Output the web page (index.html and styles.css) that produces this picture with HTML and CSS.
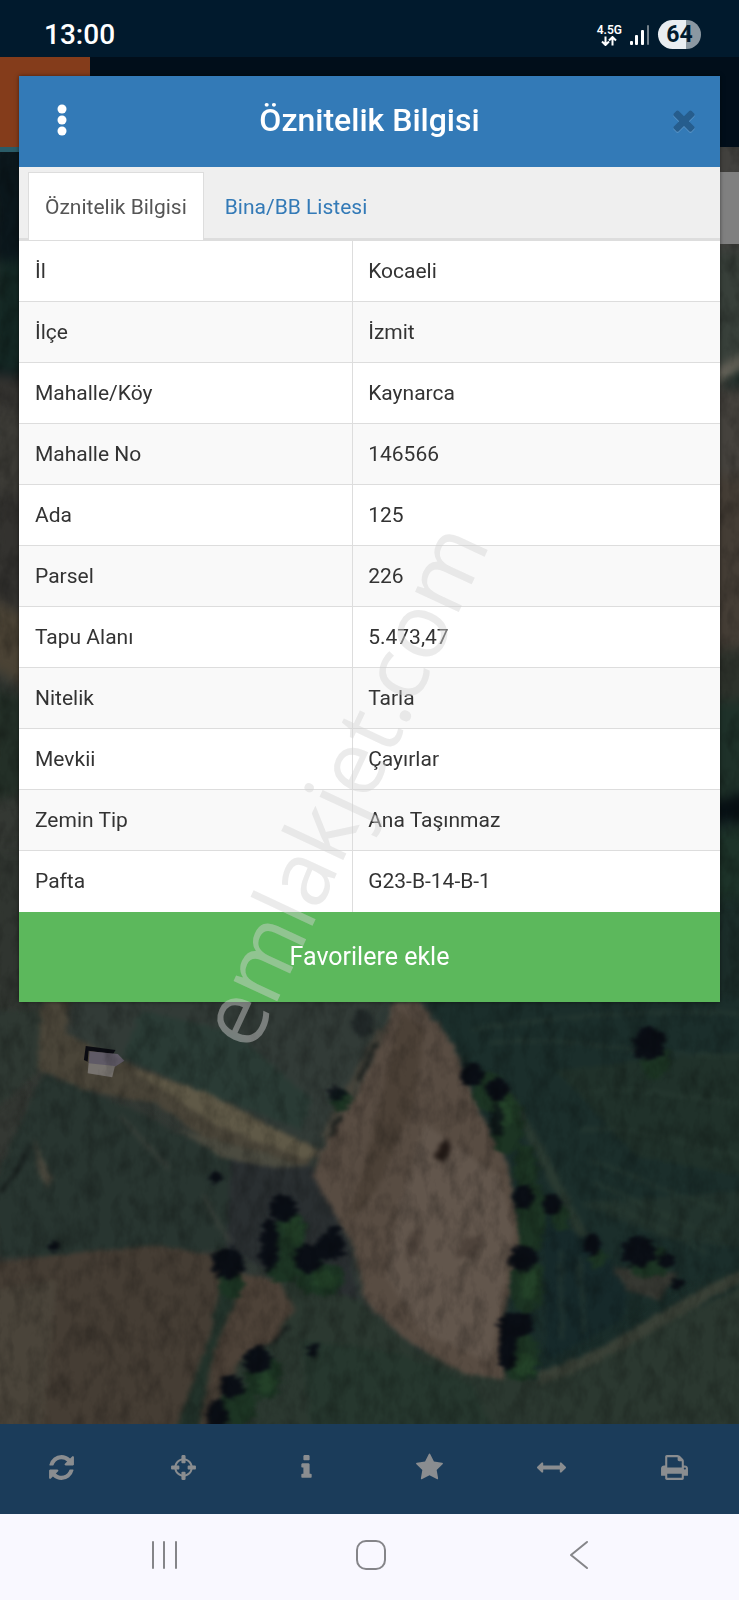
FILE: index.html
```html
<!DOCTYPE html>
<html lang="tr">
  <head>
    <meta charset="UTF-8" />
    <meta name="viewport" content="width=device-width, initial-scale=1.0" />
    <title>Öznitelik Bilgisi</title>
    <link rel="stylesheet" href="styles.css">
  </head>
  <body>
    <div class="app">
      <div class="status_bar">
        <span class="clock">13:00</span>
        <div class="status_icons">
          <div class="network">
            <span>4.5G</span>
            <svg viewBox="0 0 16 10" width="16" height="10">
              <path d="M4.5 0.5V9M1 5.5 4.5 9 8 5.5M11.5 9.5V1M8 4.5 11.5 1 15 4.5" />
            </svg>
          </div>
          <svg class="signal" viewBox="0 0 20 20" width="20" height="20">
            <rect x="0" y="16" width="3" height="4" rx="1" />
            <rect x="5" y="10" width="3" height="10" rx="1" />
            <rect x="11" y="5" width="3" height="15" rx="1" />
            <rect x="17" y="0" width="2" height="20" rx="1" opacity=".45" />
          </svg>
          <span class="battery">64</span>
        </div>
      </div>

      <div class="top_bar">
        <div class="top_bar_menu"></div>
      </div>

      <div class="map">
        <svg class="map_image" viewBox="0 147 739 1277" preserveAspectRatio="xMidYMid slice">
          <defs>
            <filter id="soft" x="-5%" y="-5%" width="110%" height="110%" color-interpolation-filters="sRGB">
              <feTurbulence type="fractalNoise" baseFrequency=".05" numOctaves="3" seed="4" result="n" />
              <feDisplacementMap in="SourceGraphic" in2="n" scale="16" xChannelSelector="R" yChannelSelector="G" />
              <feGaussianBlur stdDeviation="6" />
            </filter>
            <filter id="tree" x="-20%" y="-20%" width="140%" height="140%" color-interpolation-filters="sRGB">
              <feTurbulence type="fractalNoise" baseFrequency=".07" numOctaves="3" seed="9" result="n" />
              <feDisplacementMap in="SourceGraphic" in2="n" scale="30" xChannelSelector="R" yChannelSelector="G" />
              <feGaussianBlur stdDeviation="4" />
            </filter>
            <filter id="grain" x="0" y="0" width="100%" height="100%">
              <feTurbulence type="fractalNoise" baseFrequency=".07 .04" numOctaves="4" seed="2" />
              <feColorMatrix values="0 0 0 0 0  0 0 0 0 0  0 0 0 0 0  1.6 0 0 0 -.65" />
            </filter>
            <linearGradient id="land" x1="0" y1="0" x2="1" y2="0">
              <stop offset="0" stop-color="#343833" />
              <stop offset=".5" stop-color="#303a36" />
              <stop offset=".65" stop-color="#1a2d2b" />
              <stop offset="1" stop-color="#1b2d29" />
            </linearGradient>
          </defs>
          <rect y="147" width="739" height="1277" fill="url(#land)" />

          <!-- upper edges -->
          <g filter="url(#soft)">
            <rect x="-10" y="140" width="60" height="240" fill="#0b171c" />
            <path d="M-10 260H30V370H-10z" fill="#142824" />
            <rect x="-10" y="375" width="60" height="240" fill="#33322f" />
            <rect x="-10" y="410" width="60" height="80" fill="#3c3b36" />
            <path d="M-10 600 50 625V700L-10 670z" fill="#4b4335" />
            <path d="M-10 680 50 710V790L-10 800z" fill="#232f27" />
            <rect x="-10" y="850" width="60" height="160" fill="#303530" />
            <rect x="690" y="140" width="70" height="230" fill="#42413e" />
            <path d="M700 250H760V350L700 375z" fill="#38403a" />
            <path d="M710 376 750 352V364L710 386z" fill="#7a7266" />
            <rect x="690" y="385" width="70" height="90" fill="#45423d" />
            <rect x="690" y="475" width="70" height="190" fill="#443d35" />
            <rect x="690" y="650" width="70" height="60" fill="#2d322b" />
            <rect x="690" y="700" width="70" height="100" fill="#1e3129" />
            <path d="M700 805 750 790V825L700 820z" fill="#071014" />
            <rect x="690" y="830" width="70" height="70" fill="#1d3329" />
          </g>

          <!-- fields -->
          <g transform="translate(0 990) scale(.4713 .3333)" filter="url(#soft)">
            <path d="M160-20H840L680 470 250 240 150 130z" fill="#323b37" />
            <path d="M300 60 500 130 660 330 640 420 420 300 260 200z" fill="#2a3b35" />
            <path d="M-20 60H90L80 240-20 380z" fill="#2e3832" />
            <path d="M90 250 300 370 470 500 560 560 480 780 0 800-20 600z" fill="#283530" />
            <path d="M490 500 660 530 740 760 760 940 660 920 600 860 480 780z" fill="#2a2f31" />
            <path d="M600 860 760 930 880 1080 1150 1170 1590 880V1330H400z" fill="#2b3830" />
            <path d="M640 1050 850 1090 1000 1180 1050 1330H660z" fill="#26372e" />
            <path d="M900 20H1590V830L1450 880 1150 1120 1110 500z" fill="#1b2e2b" />
            <path d="M1180 240 1590 180V560L1350 500z" fill="#20312a" />
            <path d="M1230 640 1590 600V780L1400 740z" fill="#22332d" />
            <path d="M1150 650 1240 700 1330 900 1320 990 1160 1110z" fill="#16292a" />
            <path d="M1300 830 1440 850 1400 930 1330 900z" fill="#363832" />

            <path d="M90 20H145L140 130 270 220 400 290 680 480 650 530 430 440 330 340 180 300 80 235z" fill="#4a4539" />
            <path d="M280 240 440 310 670 480 650 510 450 400z" fill="#5f5947" />
            <path d="M380 420 560 490 650 530 560 530 470 500z" fill="#4b4b40" />
            <path d="M70 440 110 570 100 600 80 530z" fill="#4d4b40" />
            <path d="M810 120 770 230 690 440" fill="none" stroke="#48453c" stroke-width="20" />

            <path d="M-20 820 150 790 340 765 450 795 500 850 600 890 625 960 580 1040 520 1080 440 1330H-20z" fill="#453d34" />
            <path d="M500 850 590 870 620 940 590 1040 500 1120 450 1200 460 1000z" fill="#4d4238" />
            <path d="M-20 900 120 870 90 1330H-20z" fill="#4a443a" />
            <path d="M470 880 500 930 450 1100 420 1330H370L440 1060z" fill="#22322a" />

            <path d="M835 35H890L960 160 1020 370 1075 500 1110 750 1075 950 1070 1170 980 1150 860 1050 780 940 745 760 665 560 680 480 760 300 815 130z" fill="#584c42" />
            <path d="M850 60 900 120 880 330 800 600 740 690 790 430z" fill="#4c4137" />
            <path d="M900 400 1060 560 1090 730 1040 1120 900 1030 820 860 850 640z" fill="#62564c" />
            <path d="M870 730 900 700 890 790 860 810zM980 750 1030 730 1010 800 970 800z" fill="#4e433b" />
            <path d="M945 440 958 470 940 520 920 500z" fill="#241b17" />
            <path d="M1140 1165C1300 1110 1430 940 1590 850" fill="none" stroke="#3a4137" stroke-width="34" />
            <path d="M1060 300C1150 450 1190 640 1240 740" fill="none" stroke="#2a3a31" stroke-width="24" />
            <g fill="none" stroke="#2b3d34" stroke-width="8" opacity=".7">
              <path d="M1000 120C1180 80 1350 60 1570 70M1040 160C1200 130 1300 190 1570 200M1240 310C1380 280 1450 330 1570 340" />
              <path d="M1230 420C1360 400 1450 470 1570 500M1250 510C1360 560 1430 620 1540 660M1260 580C1350 620 1420 700 1540 740" />
              <path d="M1280 640C1360 680 1420 730 1500 790M1190 780V1050M1230 800 1240 1030" />
            </g>
            <path d="M60 460C50 540 20 560 0 610M610 1010 570 1070M800 160 760 270M720 380 700 440" fill="none" stroke="#151b1a" stroke-width="9" />
            <path d="M430 610 450 670 490 760M250 370 360 540" fill="none" stroke="#434640" stroke-width="8" opacity=".6" />
          </g>

          <!-- tree crowns, each with its shadow -->
          <g transform="translate(0 990) scale(.4713 .3333)" filter="url(#tree)">
            <g fill="#1c3423">
              <ellipse cx="615" cy="730" rx="34" ry="70" />
              <ellipse cx="600" cy="835" rx="36" ry="46" />
              <ellipse cx="680" cy="865" rx="50" ry="52" />
              <ellipse cx="490" cy="885" rx="26" ry="42" />
              <ellipse cx="1040" cy="310" rx="36" ry="60" />
              <ellipse cx="1076" cy="400" rx="34" ry="95" />
              <ellipse cx="1115" cy="540" rx="24" ry="80" />
              <ellipse cx="1128" cy="680" rx="30" ry="110" />
              <ellipse cx="1118" cy="880" rx="36" ry="90" />
              <ellipse cx="1104" cy="1100" rx="40" ry="76" />
              <ellipse cx="560" cy="1160" rx="38" ry="66" />
              <ellipse cx="505" cy="1245" rx="38" ry="66" />
              <ellipse cx="1390" cy="215" rx="30" ry="50" />
              <ellipse cx="1190" cy="685" rx="20" ry="36" />
              <ellipse cx="1380" cy="815" rx="48" ry="46" />
              <ellipse cx="1268" cy="805" rx="18" ry="30" />
              <ellipse cx="722" cy="330" rx="22" ry="34" />
            </g>
            <g fill="#284a2c" opacity=".6">
              <ellipse cx="625" cy="720" rx="18" ry="40" />
              <ellipse cx="690" cy="870" rx="28" ry="26" />
              <ellipse cx="1122" cy="880" rx="18" ry="50" />
              <ellipse cx="1112" cy="1125" rx="22" ry="34" />
              <ellipse cx="1075" cy="360" rx="14" ry="50" />
              <ellipse cx="565" cy="1180" rx="18" ry="30" />
            </g>
            <g fill="#0a0e15">
              <ellipse cx="602" cy="655" rx="30" ry="40" />
              <ellipse cx="572" cy="765" rx="20" ry="80" />
              <ellipse cx="654" cy="805" rx="30" ry="44" />
              <ellipse cx="702" cy="770" rx="30" ry="40" />
              <ellipse cx="484" cy="820" rx="36" ry="46" />
              <ellipse cx="1000" cy="255" rx="26" ry="34" />
              <ellipse cx="1056" cy="300" rx="24" ry="34" />
              <ellipse cx="1054" cy="390" rx="14" ry="50" opacity=".7" />
              <ellipse cx="1110" cy="620" rx="22" ry="36" />
              <ellipse cx="1110" cy="805" rx="30" ry="38" />
              <ellipse cx="1096" cy="1005" rx="38" ry="38" />
              <ellipse cx="1076" cy="1080" rx="18" ry="60" />
              <ellipse cx="546" cy="1110" rx="30" ry="42" />
              <ellipse cx="492" cy="1190" rx="26" ry="36" />
              <ellipse cx="462" cy="1275" rx="24" ry="46" />
              <ellipse cx="1376" cy="160" rx="34" ry="52" />
              <ellipse cx="1170" cy="645" rx="20" ry="32" />
              <ellipse cx="1256" cy="765" rx="18" ry="34" />
              <ellipse cx="1356" cy="785" rx="36" ry="46" />
              <ellipse cx="1415" cy="810" rx="20" ry="26" />
              <ellipse cx="714" cy="310" rx="18" ry="24" opacity=".8" />
              <ellipse cx="457" cy="563" rx="13" ry="20" />
              <ellipse cx="665" cy="1080" rx="11" ry="20" />
              <ellipse cx="113" cy="770" rx="11" ry="16" />
              <ellipse cx="1435" cy="880" rx="12" ry="18" />
              <ellipse cx="708" cy="720" rx="14" ry="16" />
              <ellipse cx="770" cy="100" rx="24" ry="40" opacity=".4" />
            </g>
          </g>

          <!-- barn -->
          <g transform="translate(0 990) scale(.4713 .3333)">
            <path d="M182 168 245 180 240 192 188 182 186 215 178 210z" fill="#0b0c12" />
            <path d="M190 184 250 192 264 212 244 230 188 222z" fill="#5f5a66" />
            <path d="M188 220 244 228 238 262 186 250z" fill="#77736f" />
          </g>
          <rect y="147" width="739" height="1277" filter="url(#grain)" opacity=".3" />
        </svg>
        <div class="map_progress"></div>
        <div class="map_control"></div>
      </div>

      <div class="toolbar">
        <button type="button" aria-label="Yenile">
          <svg viewBox="0 0 1792 1792"><path d="M1639 1056q0 5-1 7-64 268-268 434.500t-478 166.500q-146 0-282.500-55t-243.500-157l-129 129q-19 19-45 19t-45-19-19-45v-448q0-26 19-45t45-19h448q26 0 45 19t19 45-19 45l-137 137q71 66 161 102t187 36q134 0 250-65t186-179q11-17 53-117 8-23 30-23h192q13 0 22.500 9.500t9.500 22.500zm25-800v448q0 26-19 45t-45 19h-448q-26 0-45-19t-19-45 19-45l138-138q-148-137-349-137-134 0-250 65t-186 179q-11 17-53 117-8 23-30 23h-199q-13 0-22.500-9.500t-9.500-22.500v-7q65-268 270-434.500t480-166.500q146 0 284 55.500t245 156.500l130-129q19-19 45-19t45 19 19 45z" /></svg>
        </button>
        <button type="button" aria-label="Konum">
          <svg viewBox="0 0 1792 1792"><path d="M1325 1024h-109q-26 0-45-19t-19-45v-128q0-26 19-45t45-19h109q-32-108-112.500-188.500t-188.500-112.500v109q0 26-19 45t-45 19h-128q-26 0-45-19t-19-45v-109q-108 32-188.500 112.500t-112.500 188.500h109q26 0 45 19t19 45v128q0 26-19 45t-45 19h-109q32 108 112.500 188.500t188.500 112.500v-109q0-26 19-45t45-19h128q26 0 45 19t19 45v109q108-32 188.500-112.500t112.500-188.500zm339-192v128q0 26-19 45t-45 19h-143q-37 161-154.500 278.500t-278.500 154.500v143q0 26-19 45t-45 19h-128q-26 0-45-19t-19-45v-143q-161-37-278.500-154.500t-154.500-278.500h-143q-26 0-45-19t-19-45v-128q0-26 19-45t45-19h143q37-161 154.500-278.500t278.500-154.500v-143q0-26 19-45t45-19h128q26 0 45 19t19 45v143q161 37 278.500 154.500t154.500 278.500h143q26 0 45 19t19 45z" /></svg>
        </button>
        <button type="button" aria-label="Bilgi">
          <svg viewBox="0 0 1792 1792"><path d="M1216 1344v128q0 26-19 45t-45 19h-512q-26 0-45-19t-19-45v-128q0-26 19-45t45-19h64v-384h-64q-26 0-45-19t-19-45v-128q0-26 19-45t45-19h384q26 0 45 19t19 45v576h64q26 0 45 19t19 45zm-128-1152v192q0 26-19 45t-45 19h-256q-26 0-45-19t-19-45v-192q0-26 19-45t45-19h256q26 0 45 19t19 45z" /></svg>
        </button>
        <button type="button" aria-label="Favoriler">
          <svg viewBox="0 0 1792 1792"><path d="M1728 647q0 22-26 48l-363 354 86 500q1 7 1 20 0 21-10.500 35.500t-30.500 14.500q-19 0-40-12l-449-236-449 236q-22 12-40 12-21 0-31.500-14.500t-10.500-35.500q0-6 2-20l86-500-364-354q-25-27-25-48 0-37 56-46l502-73 225-455q19-41 49-41t49 41l225 455 502 73q56 9 56 46z" /></svg>
        </button>
        <button type="button" aria-label="Ölçüm">
          <svg viewBox="0 0 1792 1792"><path d="M1792 896q0 26-19 45l-256 256q-19 19-45 19t-45-19-19-45v-128h-1024v128q0 26-19 45t-45 19-45-19l-256-256q-19-19-19-45t19-45l256-256q19-19 45-19t45 19 19 45v128h1024v-128q0-26 19-45t45-19 45 19l256 256q19 19 19 45z" /></svg>
        </button>
        <button type="button" aria-label="Yazdır">
          <svg viewBox="0 0 1792 1792"><path d="M448 1536h896v-256h-896v256zm0-640h896v-384h-160q-40 0-68-28t-28-68v-160h-640v640zm1152 64q0-26-19-45t-45-19-45 19-19 45 19 45 45 19 45-19 19-45zm128 0v416q0 13-9.500 22.500t-22.500 9.500h-224v160q0 40-28 68t-68 28h-960q-40 0-68-28t-28-68v-160h-224q-13 0-22.500-9.500t-9.500-22.500v-416q0-79 56.500-135.500t135.500-56.500h64v-544q0-40 28-68t68-28h672q40 0 88 20t76 48l152 152q28 28 48 76t20 88v256h64q79 0 135.500 56.500t56.500 135.500z" /></svg>
        </button>
      </div>

      <div class="nav_bar">
        <button type="button" aria-label="Son uygulamalar">
          <svg viewBox="0 0 32 32"><path d="M5 3v26M16 3v26M28 3v26" /></svg>
        </button>
        <button type="button" aria-label="Ana ekran">
          <svg viewBox="0 0 32 32"><rect x="2" y="2" width="28" height="28" rx="9" /></svg>
        </button>
        <button type="button" aria-label="Geri">
          <svg viewBox="0 0 32 32"><path d="M24 3 8 16 24 29" /></svg>
        </button>
      </div>

      <div class="modal" role="dialog" aria-labelledby="modal_title">
        <div class="modal_header">
          <button type="button" class="menu_button" aria-label="Menü">
            <svg viewBox="0 0 10 32" width="10" height="32">
              <circle cx="5" cy="5" r="4.5" />
              <circle cx="5" cy="16" r="4.5" />
              <circle cx="5" cy="27" r="4.5" />
            </svg>
          </button>
          <h1 id="modal_title">Öznitelik Bilgisi</h1>
          <button type="button" class="close_button" aria-label="Kapat">
            <svg viewBox="0 0 1792 1792"><path d="M1490 1322q0 40-28 68l-136 136q-28 28-68 28t-68-28l-294-294-294 294q-28 28-68 28t-68-28l-136-136q-28-28-28-68t28-68l294-294-294-294q-28-28-28-68t28-68l136-136q28-28 68-28t68 28l294 294 294-294q28-28 68-28t68 28l136 136q28 28 28 68t-28 68l-294 294 294 294q28 28 28 68z" /></svg>
          </button>
        </div>
        <div class="tabs">
          <a href="#oznitelik" class="tab active">Öznitelik Bilgisi</a>
          <a href="#bina" class="tab">Bina/BB Listesi</a>
        </div>
        <table class="info" id="oznitelik">
          <tbody>
            <tr><th scope="row">İl</th><td>Kocaeli</td></tr>
            <tr><th scope="row">İlçe</th><td>İzmit</td></tr>
            <tr><th scope="row">Mahalle/Köy</th><td>Kaynarca</td></tr>
            <tr><th scope="row">Mahalle No</th><td>146566</td></tr>
            <tr><th scope="row">Ada</th><td>125</td></tr>
            <tr><th scope="row">Parsel</th><td>226</td></tr>
            <tr><th scope="row">Tapu Alanı</th><td>5.473,47</td></tr>
            <tr><th scope="row">Nitelik</th><td>Tarla</td></tr>
            <tr><th scope="row">Mevkii</th><td>Çayırlar</td></tr>
            <tr><th scope="row">Zemin Tip</th><td>Ana Taşınmaz</td></tr>
            <tr><th scope="row">Pafta</th><td>G23-B-14-B-1</td></tr>
          </tbody>
        </table>
        <button type="button" class="favorite_button">Favorilere ekle</button>
      </div>

      <div class="watermark">emlakjet.com</div>
    </div>
  </body>
</html>
```
FILE: styles.css
```css
* {
  box-sizing: border-box;
  padding: 0;
  margin: 0;
}
body {
  font-family: Roboto, "Liberation Sans", sans-serif;
  color: #333;
}
button {
  border: 0;
  background: none;
  font-family: inherit;
  cursor: pointer;
}
.app {
  position: relative;
  min-height: 100vh;
  display: flex;
  flex-direction: column;
  overflow: hidden;
}

/* status bar */
.status_bar {
  display: flex;
  justify-content: space-between;
  align-items: center;
  height: 57px;
  padding: 12px 38px 0 44px;
  background: #011a2d;
  color: #fff;
}
.clock {
  font-size: 28px;
  font-weight: 500;
}
.status_icons {
  display: flex;
  align-items: center;
  gap: 8px;
}
.network {
  display: flex;
  flex-direction: column;
  align-items: center;
  font-size: 12px;
  line-height: 12px;
  font-weight: 600;
}
.network svg {
  fill: none;
  stroke: #fff;
  stroke-width: 2;
}
.signal {
  fill: #fff;
}
.battery {
  width: 43px;
  border-radius: 15px;
  background: linear-gradient(90deg, #e9edf1 64%, #8b98a2 64%);
  color: #011a2d;
  font-size: 23px;
  line-height: 29px;
  font-weight: 700;
  text-align: center;
}

/* page behind the dialog */
.top_bar {
  height: 90px;
  background: #010e1a;
}
.top_bar_menu {
  width: 90px;
  height: 90px;
  background: #843c1b;
}
.map {
  position: relative;
  flex: 1;
  background: #1c302d;
}
.map_image {
  position: absolute;
  width: 100%;
  height: 100%;
}
.map_progress {
  position: relative;
  width: 90px;
  height: 5px;
  background: #2a5c68;
}
.map_control {
  position: absolute;
  top: 25px;
  right: 0;
  width: 90px;
  height: 72px;
  background: #808080;
}
.toolbar {
  display: grid;
  grid-template-columns: repeat(6, 1fr);
  height: 90px;
  padding: 0 3px 4px 0;
  background: #1b3c5a;
}
.toolbar svg {
  display: block;
  width: 29px;
  height: 29px;
  margin: 0 auto;
  fill: #8a8d90;
}
.nav_bar {
  display: grid;
  grid-template-columns: repeat(3, 1fr);
  height: 86px;
  padding: 0 56px 4px 60px;
  background: #f9f8ff;
}
.nav_bar svg {
  display: block;
  width: 32px;
  height: 32px;
  margin: 0 auto;
  fill: none;
  stroke: #858589;
  stroke-width: 2;
  stroke-linecap: round;
  stroke-linejoin: round;
}

/* dialog */
.modal {
  position: absolute;
  top: 76px;
  left: 19px;
  right: 19px;
  background: #fff;
  box-shadow: 0 0 4px rgba(0, 0, 0, 0.5);
}
.modal_header {
  display: grid;
  grid-template-columns: 86px 1fr 86px;
  align-items: center;
  height: 91px;
  padding-bottom: 3px;
  background: #337ab7;
  color: #fff;
}
.modal_header h1 {
  font-size: 32px;
  line-height: 40px;
  font-weight: 500;
  text-align: center;
}
.modal_header button {
  height: 100%;
}
.modal_header svg {
  display: block;
  margin: 0 auto;
}
.menu_button svg {
  fill: #fff;
}
.modal_header .close_button {
  padding-left: 14px;
}
.close_button svg {
  width: 32px;
  height: 32px;
  fill: #265d8d;
  filter: drop-shadow(0 1px 0 #5c96c8);
}
.tabs {
  display: flex;
  gap: 4px;
  height: 73px;
  padding: 5px 9px 0;
  background: #efefef;
  box-shadow: inset 0 -2px #ddd;
}
.tab {
  padding: 0 16px;
  border: 1px solid transparent;
  border-bottom: 0;
  color: #337ab7;
  font-size: 21px;
  line-height: 68px;
  text-decoration: none;
}
.tab.active {
  border-color: #ddd;
  background: #fff;
  color: #555;
}
.info {
  width: 100%;
  border-collapse: collapse;
  table-layout: fixed;
  font-size: 21px;
  line-height: 30px;
}
.info tr {
  height: 61px;
  border-top: 1px solid #ddd;
}
.info tr:nth-child(even) {
  background: #f9f9f9;
}
.info th,
.info td {
  padding: 0 16px;
  font-weight: 400;
  text-align: left;
}
.info td {
  padding-left: 15px;
}
.info th {
  width: 47.6%;
  border-right: 1px solid #ddd;
}
.favorite_button {
  display: block;
  width: 100%;
  height: 90px;
  background: #5cb85c;
  color: #fff;
  font-size: 25px;
}

.watermark {
  position: absolute;
  top: 784px;
  left: 46%;
  transform: translate(-50%, -50%) rotate(-65deg);
  color: rgba(210, 210, 210, 0.45);
  font-family: "Open Sans", "Noto Sans", sans-serif;
  font-size: 90px;
  line-height: 90px;
  pointer-events: none;
}
```
